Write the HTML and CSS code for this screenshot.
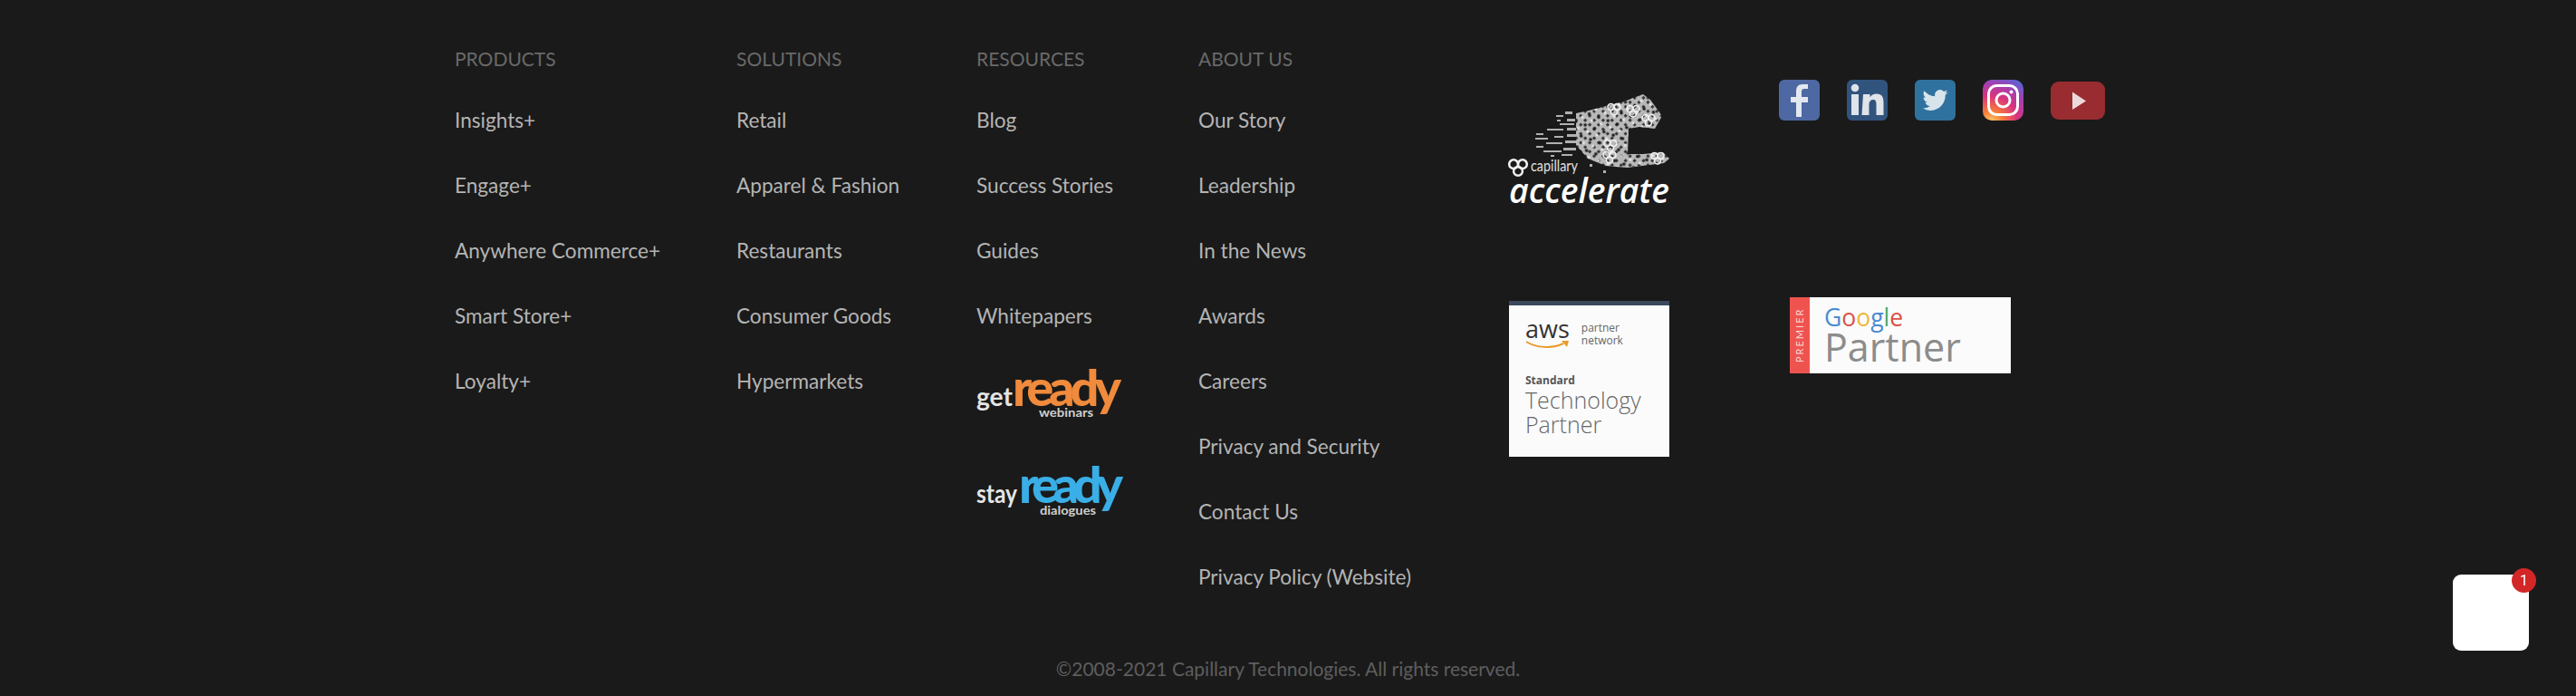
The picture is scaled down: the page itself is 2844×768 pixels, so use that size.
FILE: index.html
```html
<!DOCTYPE html>
<html lang="en">
<head>
  <meta charset="UTF-8" />
  <title>Capillary Technologies</title>
  <link rel="stylesheet" href="styles.css">
</head>
<body>
  <footer class="footer">
    <div class="footer-main">
      <div class="col col-products">
        <h4>PRODUCTS</h4>
        <ul>
          <li>Insights+</li>
          <li>Engage+</li>
          <li>Anywhere Commerce+</li>
          <li>Smart Store+</li>
          <li>Loyalty+</li>
        </ul>
      </div>
      <div class="col col-solutions">
        <h4>SOLUTIONS</h4>
        <ul>
          <li>Retail</li>
          <li>Apparel &amp; Fashion</li>
          <li>Restaurants</li>
          <li>Consumer Goods</li>
          <li>Hypermarkets</li>
        </ul>
      </div>
      <div class="col col-resources">
        <h4>RESOURCES</h4>
        <ul>
          <li>Blog</li>
          <li>Success Stories</li>
          <li>Guides</li>
          <li>Whitepapers</li>
        </ul>
        <svg class="ready ready-get" viewBox="0 0 160 54" width="160" height="54">
          <text x="0" y="40" class="ready-pre" textLength="40" lengthAdjust="spacingAndGlyphs">get</text>
          <text x="40" y="40" class="ready-word ready-orange" textLength="120" lengthAdjust="spacing">ready</text>
          <text x="69" y="52" class="ready-sub" textLength="60" lengthAdjust="spacingAndGlyphs">webinars</text>
        </svg>
        <svg class="ready ready-stay" viewBox="0 0 162 56" width="162" height="56">
          <text x="0" y="40" class="ready-pre" textLength="45" lengthAdjust="spacingAndGlyphs">stay</text>
          <text x="47" y="40" class="ready-word ready-blue" textLength="115" lengthAdjust="spacing">ready</text>
          <text x="70" y="53" class="ready-sub" textLength="62" lengthAdjust="spacingAndGlyphs">dialogues</text>
        </svg>
      </div>
      <div class="col col-about">
        <h4>ABOUT US</h4>
        <ul>
          <li>Our Story</li>
          <li>Leadership</li>
          <li>In the News</li>
          <li>Awards</li>
          <li>Careers</li>
          <li>Privacy and Security</li>
          <li>Contact Us</li>
          <li>Privacy Policy (Website)</li>
        </ul>
      </div>

      <div class="badges">
        <div class="badge-row badge-row-top">
          <svg class="accelerate" viewBox="0 0 177 125" width="177" height="125">
            <defs>
              <pattern id="spots" width="7" height="7" patternUnits="userSpaceOnUse" patternTransform="rotate(45)">
                <rect width="7" height="7" fill="#b8b8b8" />
                <rect x="2" y="2" width="3" height="3" fill="#3a3a3a" />
              </pattern>
              <pattern id="mottle" width="11" height="13" patternUnits="userSpaceOnUse" patternTransform="rotate(20)">
                <circle cx="3" cy="4" r="1.800" fill="#1a1a1a" />
                <circle cx="8" cy="10" r="1.500" fill="#e8e8e8" />
              </pattern>
              <g id="heart">
                <circle cx="-3.500" cy="-2" r="3.500" />
                <circle cx="3.500" cy="-2" r="3.500" />
                <circle cx="0" cy="3.500" r="3.500" />
              </g>
            </defs>
            <path fill="url(#spots)" d="M74 22L88 19L107 14L127 9L148 1L156 7L169 25L161 39L144 37L132 39L131 67L148 67L170 65L177 72L171 77L131 82L107 80L87 72L80 64L74 57Z" />
            <path fill="url(#mottle)" d="M74 22L88 19L107 14L127 9L148 1L156 7L169 25L161 39L144 37L132 39L131 67L148 67L170 65L177 72L171 77L131 82L107 80L87 72L80 64L74 57Z" />
            <g class="knot">
              <use href="#heart" x="116" y="17" />
              <use href="#heart" x="112" y="57" />
              <use href="#heart" x="111" y="70" />
              <use href="#heart" x="137" y="19" />
              <use href="#heart" x="154" y="29" />
              <use href="#heart" x="164" y="71" />
            </g>
            <g class="dust">
              <rect x="52" y="24" width="8" height="2" /><rect x="62" y="20" width="8" height="3" />
              <rect x="53" y="29" width="4" height="2" /><rect x="42" y="39" width="18" height="2" />
              <rect x="64" y="28" width="9" height="3" /><rect x="30" y="44" width="8" height="2" />
              <rect x="56" y="33" width="16" height="2" /><rect x="64" y="38" width="10" height="3" />
              <rect x="29" y="49" width="14" height="2" /><rect x="50" y="47" width="10" height="2" />
              <rect x="64" y="45" width="10" height="3" /><rect x="30" y="58" width="8" height="2" />
              <rect x="41" y="54" width="18" height="2" /><rect x="62" y="52" width="12" height="3" />
              <rect x="38" y="63" width="20" height="2" /><rect x="60" y="60" width="14" height="3" />
              <rect x="46" y="68" width="4" height="2" /><rect x="58" y="67" width="12" height="2" />
              <rect x="89" y="78" width="3" height="3" /><rect x="104" y="85" width="3" height="3" />
            </g>
            <use class="knot knot-logo" href="#heart" transform="translate(10 81) scale(1.400)" />
            <text x="24" y="86" class="acc-small" textLength="52" lengthAdjust="spacingAndGlyphs">capillary</text>
            <text x="0" y="121" class="acc-big" textLength="177" lengthAdjust="spacingAndGlyphs">accelerate</text>
          </svg>
          <div class="social">
            <svg class="icon" viewBox="0 0 45 45" width="45" height="45">
              <rect width="45" height="45" rx="6" fill="#4d68a2" />
              <path fill="#e3e7f0" d="M25 41V25h7v-6h-7v-6c0-2 1-3 3-3h4V5h-6c-5 0-7 3-7 8v6h-6v6h6v16z" />
            </svg>
            <svg class="icon" viewBox="0 0 45 45" width="45" height="45">
              <rect width="45" height="45" rx="6" fill="#31547e" />
              <circle cx="9" cy="9" r="4.300" fill="#dfe3ea" />
              <path fill="#dfe3ea" d="M5 16h8v23H5zM18 16h7.500v3.200c1.500-2.300 4-3.700 7.300-3.700 6 0 7.700 3.800 7.700 9.500V39h-8V27c0-3-.7-5-3.500-5s-4.500 2-4.500 5v12h-8z" />
            </svg>
            <svg class="icon" viewBox="0 0 45 45" width="45" height="45">
              <rect width="45" height="45" rx="6" fill="#2f729f" />
              <path transform="translate(8.500 8.500) scale(1.170)" fill="#d8e4ec" d="M23.953 4.570a10 10 0 01-2.825.775 4.958 4.958 0 002.163-2.723c-.951.555-2.005.959-3.127 1.184a4.920 4.920 0 00-8.384 4.482C7.690 8.095 4.067 6.130 1.640 3.162a4.822 4.822 0 00-.666 2.475c0 1.710.870 3.213 2.188 4.096a4.904 4.904 0 01-2.228-.616v.060a4.923 4.923 0 003.946 4.827 4.996 4.996 0 01-2.212.085 4.936 4.936 0 004.604 3.417 9.867 9.867 0 01-6.102 2.105c-.390 0-.779-.023-1.170-.067a13.995 13.995 0 007.557 2.209c9.053 0 13.998-7.496 13.998-13.985 0-.210 0-.420-.015-.630A9.935 9.935 0 0024 4.590z" />
            </svg>
            <svg class="icon" viewBox="0 0 45 45" width="45" height="45">
              <defs>
                <radialGradient id="insta" cx="0.2" cy="1.05" r="1.2">
                  <stop offset="0" stop-color="#fdd26d" />
                  <stop offset="0.25" stop-color="#f7793a" />
                  <stop offset="0.55" stop-color="#d9337e" />
                  <stop offset="0.8" stop-color="#a23fb0" />
                  <stop offset="1" stop-color="#5c63d6" />
                </radialGradient>
              </defs>
              <rect width="45" height="45" rx="10" fill="url(#insta)" />
              <rect x="6.500" y="6.500" width="32" height="32" rx="9" fill="none" stroke="#fff" stroke-width="3" />
              <circle cx="22.500" cy="22.500" r="7.500" fill="none" stroke="#fff" stroke-width="3" />
              <circle cx="31.500" cy="13.500" r="2" fill="#fff" />
            </svg>
            <svg class="icon icon-yt" viewBox="0 0 60 42" width="60" height="42">
              <rect width="60" height="42" rx="9" fill="#992c30" />
              <path fill="#ecd9da" d="M24 11.500L39 21.500L24 31z" />
            </svg>
          </div>
        </div>

        <div class="badge-row">
          <div class="aws">
            <div class="aws-head">
              <div class="aws-mark">
                <span class="aws-word">aws</span>
                <svg class="aws-smile" viewBox="0 0 48 11" width="48" height="11">
                  <path fill="none" stroke="#e89b2a" stroke-width="2" d="M1 2C12 9 30 10 42 4" />
                  <path fill="#e89b2a" d="M40 1L48 1L46 8z" />
                </svg>
              </div>
              <span class="aws-net">partner<br>network</span>
            </div>
            <div class="aws-level">Standard</div>
            <div class="aws-type">Technology<br>Partner</div>
          </div>
          <div class="google">
            <span class="google-stripe">PREMIER</span>
            <div class="google-body">
              <div class="google-word"><span class="g-blue">G</span><span class="g-red">o</span><span class="g-yellow">o</span><span class="g-blue">g</span><span class="g-green">l</span><span class="g-red">e</span></div>
              <div class="google-partner">Partner</div>
            </div>
          </div>
        </div>
      </div>
    </div>
    <p class="copyright">©2008-2021 Capillary Technologies. All rights reserved.</p>
  </footer>

  <div class="chat">
    <span class="chat-count">1</span>
  </div>
</body>
</html>
```

FILE: styles.css
```css
html, body {
  margin: 0;
  height: 768px;
  overflow: hidden;
  background: #1a1a1a;
}

.footer {
  font-family: "Lato", "Open Sans", sans-serif;
  font-size: 22.6px;
  color: #b4b4b4;
}

.footer-main {
  display: flex;
  align-items: flex-start;
  padding: 0 0 0 502px;
  height: 712px;
}

.col h4 {
  margin: 0;
  padding-top: 50px;
  height: 47px;
  line-height: 30px;
  font-size: 21px;
  font-weight: 400;
  color: #696969;
}

.col ul {
  list-style: none;
  margin: 0;
  padding: 0;
}

.col li {
  height: 72px;
  line-height: 72px;
  white-space: nowrap;
}

.col-products { width: 311px; }
.col-solutions { width: 265px; }
.col-resources { width: 245px; }
.col-about { width: 343px; }

.ready { display: block; overflow: visible; }
.ready-get { margin-top: 23px; }
.ready-stay { margin-top: 53px; }
.ready-pre { font: 700 29px "Lato", sans-serif; fill: #e4e4e4; }
.ready-word { font: 900 56px "Lato", sans-serif; }
.ready-orange { fill: #f08a3c; }
.ready-blue { fill: #3aaee6; }
.ready-sub { font: 700 14px "Lato", sans-serif; fill: #cfcfcf; }

.badges {
  padding-top: 88px;
}

.badge-row {
  display: flex;
  align-items: flex-start;
}

.badge-row-top {
  height: 240px;
}

.accelerate {
  display: block;
  width: 177px;
  margin-top: 15px;
  margin-right: 121px;
  overflow: visible;
}

.dust rect { fill: #b0b0b0; }
.knot { fill: none; stroke: #f0f0f0; stroke-width: 1.6; }
.knot-logo { stroke-width: 1.8; }
.acc-small { font: 400 17px "Lato", sans-serif; fill: #e0e0e0; }
.acc-big { font: italic 600 37px "Open Sans", sans-serif; fill: #fff; }

.social {
  display: flex;
  align-items: center;
  gap: 30px;
  height: 45px;
}

.icon { display: block; }

.aws {
  box-sizing: border-box;
  width: 177px;
  height: 172px;
  margin-top: 4px;
  margin-right: 133px;
  padding: 10px 18px 0;
  background: #fbfbfb;
  border-top: 5px solid #3a4a5a;
  font-family: "Open Sans", sans-serif;
  color: #5f5f5f;
}

.aws-head {
  display: flex;
  gap: 13px;
}

.aws-mark {
  height: 44px;
}

.aws-word {
  display: block;
  font-size: 27px;
  line-height: 32px;
  color: #333;
}

.aws-smile {
  display: block;
  margin-top: -4px;
}

.aws-net {
  font-size: 12px;
  line-height: 13.5px;
  padding-top: 8px;
  color: #666;
}

.aws-level {
  margin-top: 21px;
  font-size: 12px;
  line-height: 16px;
  font-weight: 700;
  color: #555;
}

.aws-type {
  font-size: 25px;
  line-height: 27px;
  font-weight: 300;
  color: #666;
  white-space: nowrap;
}

.google {
  display: flex;
  width: 244px;
  height: 84px;
  background: #fbfbfb;
}

.google-stripe {
  width: 22px;
  background: #ef5350;
  color: #fbd8d6;
  font: 400 11px "Lato", sans-serif;
  letter-spacing: 2px;
  line-height: 22px;
  text-align: center;
  writing-mode: vertical-rl;
  transform: rotate(180deg);
}

.google-body {
  padding: 7px 0 0 16px;
  font-family: "Open Sans", sans-serif;
}

.google-word {
  font-size: 26.5px;
  line-height: 30px;
}

.google-partner {
  font-size: 43px;
  line-height: 36px;
  color: #8c8c8c;
  font-weight: 400;
}

.g-blue { color: #4a8bd0; }
.g-red { color: #d9534a; }
.g-yellow { color: #eeb93a; }
.g-green { color: #4fa861; }

.copyright {
  margin: 0;
  height: 56px;
  line-height: 52px;
  text-align: center;
  font-size: 21px;
  color: #5e5e5e;
}

.chat {
  position: fixed;
  left: 2708px;
  top: 634px;
  width: 84px;
  height: 84px;
  background: #fff;
  border-radius: 9px;
}

.chat-count {
  position: absolute;
  top: -7px;
  right: -8px;
  width: 27px;
  height: 27px;
  border-radius: 50%;
  background: #d32727;
  color: #fff;
  font: 400 17px/27px "Roboto", sans-serif;
  text-align: center;
}
```
